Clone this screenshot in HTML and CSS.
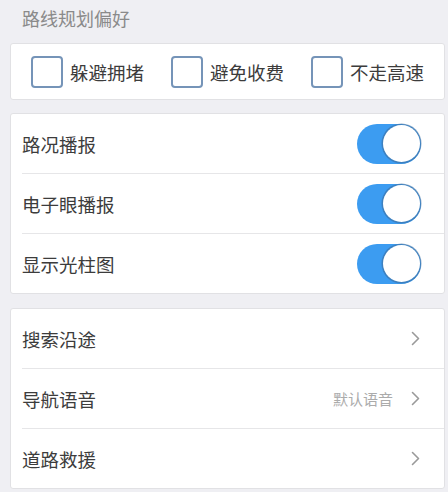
FILE: index.html
```html
<!DOCTYPE html>
<html lang="zh-CN">
<head>
<meta charset="utf-8">
<link rel="stylesheet" href="styles.css">
</head>
<body>
<div class="page">
  <div class="section-title">路线规划偏好</div>
  <div class="card checks">
    <div class="check"><span class="box"></span><span class="check-label">躲避拥堵</span></div>
    <div class="check"><span class="box"></span><span class="check-label">避免收费</span></div>
    <div class="check"><span class="box"></span><span class="check-label">不走高速</span></div>
  </div>

  <div class="card list">
    <div class="row"><span class="label">路况播报</span><span class="toggle"><span class="knob"></span></span></div>
    <div class="row"><span class="label">电子眼播报</span><span class="toggle"><span class="knob"></span></span></div>
    <div class="row"><span class="label">显示光柱图</span><span class="toggle"><span class="knob"></span></span></div>
  </div>

  <div class="card list">
    <div class="row"><span class="label">搜索沿途</span><span class="right"><svg class="chev" width="9" height="15" viewBox="0 0 9 15"><polyline points="1.5,1.5 7.5,7.5 1.5,13.5" fill="none" stroke="#9a9a9a" stroke-width="1.6" stroke-linecap="round" stroke-linejoin="round"/></svg></span></div>
    <div class="row"><span class="label">导航语音</span><span class="right"><span class="value">默认语音</span><svg class="chev" width="9" height="15" viewBox="0 0 9 15"><polyline points="1.5,1.5 7.5,7.5 1.5,13.5" fill="none" stroke="#9a9a9a" stroke-width="1.6" stroke-linecap="round" stroke-linejoin="round"/></svg></span></div>
    <div class="row"><span class="label">道路救援</span><span class="right"><svg class="chev" width="9" height="15" viewBox="0 0 9 15"><polyline points="1.5,1.5 7.5,7.5 1.5,13.5" fill="none" stroke="#9a9a9a" stroke-width="1.6" stroke-linecap="round" stroke-linejoin="round"/></svg></span></div>
  </div>
</div>
</body>
</html>
```

FILE: styles.css
```css
html, body {
  margin: 0;
  padding: 0;
  background: #efeff3;
}
body {
  font-family: "Noto Sans CJK SC", "Noto Sans", sans-serif;
  color: #3c3c3c;
}
.page {
  padding: 0 3px 0 10px;
  width: 435px;
}
.section-title {
  height: 36px;
  line-height: 36px;
  padding-left: 12px;
  margin-bottom: 7px;
  font-size: 18px;
  color: #8a8a8a;
}
.card {
  background: #fff;
  border: 1px solid #e1e1e4;
  border-radius: 3px;
  box-sizing: border-box;
}
.checks {
  height: 57px;
  display: flex;
  align-items: center;
  padding-left: 20px;
  gap: 27px;
}
.check {
  display: flex;
  align-items: center;
  gap: 7px;
}
.box {
  width: 32px;
  height: 32px;
  box-sizing: border-box;
  border: 2px solid #7594b8;
  border-radius: 4px;
}
.check-label {
  font-size: 18.5px;
  line-height: 24px;
  color: #3c3c3c;
}
.list {
  margin-top: 13px;
}
.list + .list {
  margin-top: 14px;
}
.row {
  height: 59px;
  margin-left: 11px;
  padding-right: 23px;
  display: flex;
  align-items: center;
  justify-content: space-between;
}
.row + .row {
  border-top: 1px solid #e6e6e8;
}
.label {
  font-size: 18.5px;
  line-height: 24px;
}
.toggle {
  width: 64px;
  height: 40px;
  border-radius: 20px;
  background: #3c9cf1;
  position: relative;
}
.knob {
  position: absolute;
  right: 1px;
  top: 1.5px;
  width: 37px;
  height: 37px;
  border-radius: 50%;
  background: #fff;
  box-shadow: 0 0 0 1.5px rgba(60, 110, 160, 0.6);
}
.right {
  display: flex;
  align-items: center;
  gap: 18px;
  padding-right: 1px;
}
.value {
  font-size: 15px;
  color: #ababab;
}
.chev {
  display: block;
}
```
